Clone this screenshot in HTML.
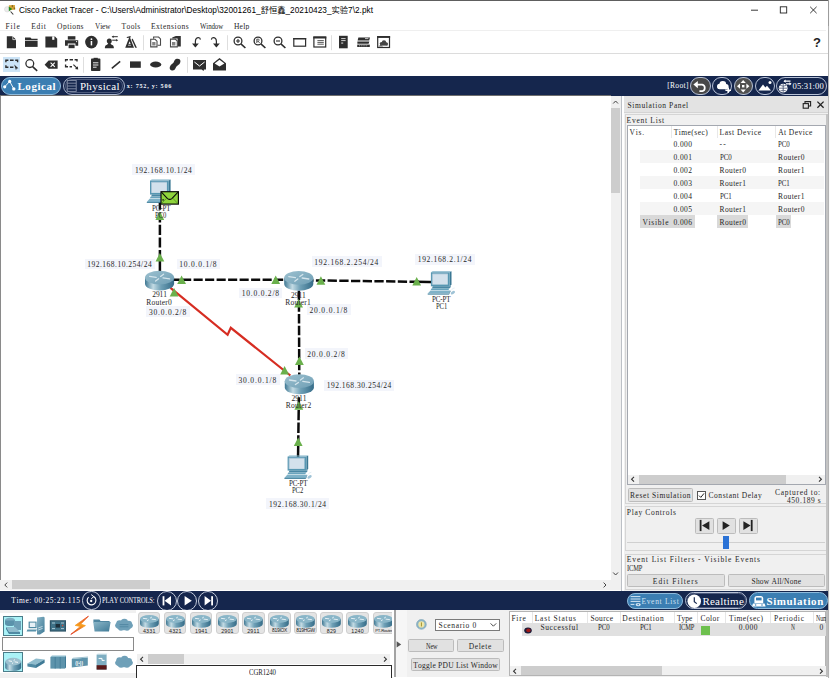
<!DOCTYPE html><html><head><meta charset="utf-8"><title>Cisco Packet Tracer</title><style>
html,body{margin:0;padding:0;background:#fff;}
#app{position:relative;width:830px;height:678px;overflow:hidden;background:#fff;font-family:"Liberation Serif",serif;font-size:7.5px;font-kerning:none;color:#262626;}
#app div,#app span,#app svg{position:absolute;box-sizing:border-box;}
.t{white-space:pre;line-height:10px;height:10px;}
.w{color:#fff;}
.btn{background:#e1e1e1;border:1px solid #bcbcbc;border-radius:1.5px;}
.lbl{background:#f3f5fb;}
.big{font-size:11px;line-height:14px;height:14px;color:#fff;font-weight:bold;}
.pill{border-radius:10px;border:1px solid #c9d3e6;}
</style></head><body><div id="app"><div class="" style="left:0px;top:0px;width:828.2px;height:1px;background:#5e5e5e"></div><svg style="left:3px;top:2px" width="14" height="14" viewBox="3 2 14 14"><circle cx="7.2" cy="9.3" r="2.7" fill="#ececec" stroke="#d0d0d0" stroke-width="0.5"/><path d="M8.8 5.2 L14.9 4.9 L15.2 9.6 L9.6 10.2Z" fill="#d8a83a"/><path d="M11.6 5.2 L13 5.1 L13.2 7 L11.8 7.2Z M13.6 7.6 L15 7.4 L15.1 9.2 L13.8 9.4Z" fill="#8a6a1e"/><path d="M8.7 6.4 L12.2 8.9 L8.9 11.2Z" fill="#1f8a22"/><path d="M10.6 11.5 L13.3 14.5" stroke="#3a3a3a" stroke-width="1.1"/></svg><span class="t" style="left:19px;top:5px;font-family:'Liberation Sans','Noto Sans CJK SC',sans-serif;font-size:8.29px;letter-spacing:0;line-height:11px;height:11px;color:#000" id="title">Cisco Packet Tracer - C:\Users\Administrator\Desktop\32001261_舒恒鑫_20210423_实验7\2.pkt</span><svg style="left:745px;top:3px" width="80" height="14" viewBox="0 0 80 14" fill="none" stroke="#222" stroke-width="0.9"><path d="M6 7.2 H13"/><rect x="35.3" y="3.8" width="6.4" height="6.2"/><path d="M65.2 3.8 L71.6 10.2 M71.6 3.8 L65.2 10.2"/></svg><span class="t " style="left:5.5px;top:21.7px;letter-spacing:0.91px;">File</span><span class="t " style="left:31.3px;top:21.7px;letter-spacing:0.71px;">Edit</span><span class="t " style="left:57.1px;top:21.7px;letter-spacing:0.44px;">Options</span><span class="t " style="left:94.7px;top:21.7px;letter-spacing:-0.12px;transform:scaleX(0.972);transform-origin:0 50%;">View</span><span class="t " style="left:121.5px;top:21.7px;letter-spacing:0.41px;">Tools</span><span class="t " style="left:150.9px;top:21.7px;letter-spacing:0.54px;">Extensions</span><span class="t " style="left:200.0px;top:21.7px;letter-spacing:-0.12px;transform:scaleX(0.915);transform-origin:0 50%;">Window</span><span class="t " style="left:234.0px;top:21.7px;letter-spacing:0.19px;">Help</span><div class="" style="left:0px;top:30px;width:826px;height:1px;background:#efefef"></div><div class="" style="left:0px;top:53px;width:830px;height:1px;background:#dcdcdc"></div><svg style="left:0;top:32px" width="830" height="21" viewBox="0 32 830 21" fill="#2e2e2e">
<!-- new file -->
<path d="M6.8 36.2 H12.6 L16 39.6 V48.2 H6.8Z"/><path d="M12.8 36 V39.6 H16.2" fill="none" stroke="#fff" stroke-width="0.7"/>
<!-- open folder -->
<path d="M25 37.4 H30.4 L31.6 38.8 H37.6 V40.2 H25Z"/><rect x="25" y="40.9" width="12.6" height="6" />
<!-- save -->
<path d="M45.4 36.6 H55 L57.2 38.8 V47.6 H45.4Z"/><rect x="52.2" y="36.4" width="2.2" height="3.4" fill="#fff"/>
<!-- print -->
<rect x="67.8" y="36.2" width="7.6" height="3.4"/><path d="M65 40.2 H78.2 V45.8 H75.4 V43.6 H67.8 V45.8 H65Z"/><rect x="68.6" y="44.6" width="6" height="3.6"/><circle cx="76.6" cy="41.6" r="0.6" fill="#fff"/>
<!-- info -->
<circle cx="91.4" cy="42.1" r="6.3"/><rect x="90.7" y="41" width="1.5" height="4.4" fill="#fff"/><circle cx="91.45" cy="39.2" r="0.9" fill="#fff"/>
<!-- user arrows -->
<circle cx="109.3" cy="41" r="2.5"/><path d="M104.9 48.3 V47 Q104.9 45.2 107.4 44.6 L108.3 43 H110.4 L111.2 44.6 Q113.8 45.2 113.8 47 V48.3Z"/><path d="M112.6 36.7 H117.8 M112.2 40.2 H117" stroke="#2e2e2e" stroke-width="1" fill="none"/><path d="M111.6 36.7 L113.6 35.4 V38Z M118.2 40.2 L116.2 38.9 V41.5Z"/>
<!-- wizard -->
<path d="M129.6 36.6 L134 47.7 H125.2Z"/><path d="M129.6 41.2 L131.2 45.6 H128Z" fill="#fff"/><path d="M128.2 44.4 H131" stroke="#2e2e2e" stroke-width="0.9"/><path d="M126.8 36.9 L130.6 35.9 V37.4 L126.8 37.9Z"/><path d="M132.6 38.4 L136.9 47.7 H135.3 L131.6 39.4Z"/>
<!-- sep -->
<rect x="143.2" y="35.2" width="0.7" height="15" fill="#d0d0d0"/>
<!-- copy -->
<g fill="none" stroke="#4a4a4a" stroke-width="1.1"><path d="M153.6 38.8 V37 H158.6 L160.5 38.9 V45.3 H157.6"/><path d="M150.7 39.3 H155.1 L157 41.2 V46.9 H150.7Z" fill="#fff"/></g><rect x="152.2" y="42" width="3.3" height="3.5" fill="#858585"/>
<!-- paste -->
<path d="M172.2 37.6 L175.8 35.9 H180.8 V46.6 H177.6 V38.6 H172.2Z" fill="#333"/><path d="M170.5 39.1 H175.3 L177.3 41 V46.9 H170.5Z" fill="#fff" stroke="#4a4a4a" stroke-width="1.1"/><rect x="172" y="42" width="3.4" height="3.5" fill="#858585"/>
<!-- undo -->
<g fill="none" stroke="#2e2e2e" stroke-width="1.2"><path d="M195.4 46.4 V41.6 Q195.4 37.6 198.6 37.6 Q200.2 37.6 200.4 39.6"/></g><path d="M192 43.6 H198.8 L195.4 47.4Z"/>
<!-- redo -->
<g fill="none" stroke="#2e2e2e" stroke-width="1.2"><path d="M216.4 46.4 V41.6 Q216.4 37.6 213.2 37.6 Q211.6 37.6 211.4 39.6"/></g><path d="M213 43.6 H219.8 L216.4 47.4Z"/>
<rect x="227" y="35.2" width="0.7" height="15" fill="#d0d0d0"/>
<!-- zoom in / reset / out -->
<g fill="none" stroke="#2e2e2e" stroke-width="1.3"><circle cx="238" cy="41" r="3.9"/><path d="M240.9 43.9 L245.4 48" stroke-width="1.6"/><path d="M236 41 H240 M238 39 V43" stroke-width="1.1"/>
<circle cx="258" cy="41" r="3.9"/><path d="M260.9 43.9 L265.4 48" stroke-width="1.6"/><path d="M256.8 43 V39.2 H258.4 Q259.4 39.4 259.2 40.4 Q259 41.2 257 41.2 M258.2 41.2 L259.6 43" stroke-width="0.8"/>
<circle cx="278" cy="41" r="3.9"/><path d="M280.9 43.9 L285.4 48" stroke-width="1.6"/><path d="M276 41 H280" stroke-width="1.1"/></g>
<!-- viewport -->
<rect x="293.8" y="38.6" width="11.8" height="7.6" fill="none" stroke="#2e2e2e" stroke-width="1.2"/><rect x="293.2" y="38" width="13" height="1.4"/>
<!-- list dialog -->
<rect x="313.9" y="37.1" width="11.8" height="9.9" fill="none" stroke="#2e2e2e" stroke-width="1.2"/><rect x="313.3" y="36.5" width="13" height="2"/><path d="M317.4 40.6 H323.8 M317.4 42.4 H323.8 M317.4 44.2 H323.8" stroke="#2e2e2e" stroke-width="0.8"/>
<rect x="331.2" y="35.2" width="0.7" height="15" fill="#d0d0d0"/>
<!-- server -->
<rect x="339" y="35.8" width="8.7" height="12.5"/><path d="M341.2 38.6 H345.6 M341.2 40.6 H345.6" stroke="#fff" stroke-width="0.8"/><rect x="341.2" y="42.6" width="2" height="0.9" fill="#fff"/>
<!-- stacked -->
<path d="M358.4 37.4 H370 L369.2 40.6 H357.6Z"/><path d="M357.4 41.4 H369.4 L368.6 43.8 H357.4Z"/><path d="M357.2 44.6 H369.8 V47 H357.2Z"/><path d="M359 45.8 H368" stroke="#fff" stroke-width="0.6" stroke-dasharray="1 0.8"/><path d="M365 38.6 H368.4" stroke="#fff" stroke-width="0.7"/>
<!-- image cloud -->
<rect x="377.7" y="36.7" width="11.8" height="10.8" fill="none" stroke="#2e2e2e" stroke-width="1.2"/><rect x="377.1" y="36.1" width="13" height="1.8"/><g fill="#444"><circle cx="381.4" cy="43.6" r="1.6"/><circle cx="384" cy="42.4" r="2.2"/><circle cx="386.4" cy="43.8" r="1.5"/><rect x="380" y="43.4" width="7.6" height="2.2"/></g><path d="M378.4 46.6 L381 44.2 L383 46.6" fill="#666"/>
</svg><span class="t" style="left:813px;top:34.6px;font-family:'Liberation Sans',sans-serif;font-weight:bold;font-size:13px;line-height:16px;height:16px;color:#222">?</span><div class="" style="left:3px;top:57px;width:17px;height:15.4px;background:#cce4f7"></div><svg style="left:0;top:55px" width="830" height="20" viewBox="0 55 830 20" fill="#2e2e2e">
<!-- select -->
<path d="M5.9 62.2 V60.3 H8.4 M10 60.3 H13.6 M15.2 60.3 H17.6 V62.2 M5.9 65.2 V67.2 H8.4 M10 67.2 H13.4" fill="none" stroke="#2e2e2e" stroke-width="1.4"/><path d="M14.2 64.6 L18.4 68.2 L16.6 68.4 L16 70.2 Z"/>
<!-- magnifier -->
<circle cx="29.8" cy="63.6" r="3.9" fill="none" stroke="#2e2e2e" stroke-width="1.3"/><path d="M32.6 66.6 L37.2 70.8" stroke="#2e2e2e" stroke-width="1.6"/>
<!-- delete -->
<path d="M44.6 64.7 L48.6 60.6 H57.6 V68.8 H48.6Z"/><path d="M50.6 62.6 L54.8 66.8 M54.8 62.6 L50.6 66.8" stroke="#fff" stroke-width="1.1"/>
<!-- resize -->
<path d="M65.6 61.6 V59.8 H68 M69.6 59.8 H73 M74.6 59.8 H77 V61.6 M65.6 64.6 V66.8 H68 M69.6 66.8 H72" fill="none" stroke="#2e2e2e" stroke-width="1.4"/><path d="M73.4 64.6 L77.2 68.4" stroke="#2e2e2e" stroke-width="1.2"/><path d="M78.2 69.4 L75 69 L77.8 66.2Z"/>
<rect x="83.2" y="57" width="0.7" height="15.8" fill="#d0d0d0"/>
<!-- note -->
<rect x="91" y="58.6" width="9.4" height="12.4" rx="0.8"/><rect x="93.6" y="57.8" width="4.2" height="1.8"/><path d="M93 62.8 H98.4 M93 65 H98.4 M93 67.2 H96.6" stroke="#fff" stroke-width="0.9"/>
<!-- line -->
<path d="M111.8 68.4 L120.2 61.4" stroke="#2e2e2e" stroke-width="1.6"/>
<!-- rect -->
<rect x="130" y="61.4" width="10.8" height="6.4"/>
<!-- ellipse -->
<ellipse cx="155.7" cy="64.5" rx="5.6" ry="3"/>
<!-- freeform -->
<path d="M176.6 58.8 Q180.8 58.4 180.4 62 Q180 64.4 177.6 65.6 Q176 66.6 175.4 68.6 Q174.6 70.8 171.8 70.4 Q169.2 69.8 169.8 67 Q170.4 64.8 172.6 63.6 Q173.8 62.8 174.2 61 Q174.8 59 176.6 58.8Z"/>
<rect x="187.2" y="57" width="0.7" height="15.8" fill="#d0d0d0"/>
<!-- envelope -->
<path d="M193 60 H206 V69.4 H204 L203.6 71 L201.6 69.4 H193Z"/><path d="M194.4 62 L199.5 66 L204.6 62" fill="none" stroke="#fff" stroke-width="1"/>
<!-- open envelope -->
<path d="M213 63.2 L219.5 58 L226 63.2 V70.6 H213Z"/><path d="M214.6 63.4 L219.5 59.8 L224.4 63.4 L219.5 66.6Z" fill="#fff"/>
</svg><div class="" style="left:0px;top:76px;width:830px;height:19.6px;background:#15264d"></div><div class="" style="left:0.8px;top:77.3px;width:60.6px;height:17.5px;background:#3b7eb2;border:1px solid #8fbbdc;border-radius:9px"></div><svg style="left:2px;top:78px" width="15" height="15" viewBox="0 0 15 15"><path d="M2.7 8.8 L7.7 3.4 L11.8 10.9" stroke="#fff" stroke-width="0.9" fill="none"/><circle cx="2.7" cy="8.8" r="1.6" fill="#fff"/><circle cx="7.7" cy="3.4" r="1.6" fill="#fff"/><circle cx="11.8" cy="10.9" r="1.7" fill="#fff"/></svg><span class="t big" style="left:17.5px;top:79.0px;font-size:11.0px;letter-spacing:0.52px;">Logical</span><div class="" style="left:63.4px;top:77.1px;width:61.4px;height:17.7px;background:#15264d;border:1px solid #aab6cd;border-radius:9px"></div><div class="" style="left:64.8px;top:78.5px;width:58.6px;height:14.9px;border:1px solid #4c5a7c;border-radius:8px"></div><svg style="left:66px;top:79px" width="12" height="14" viewBox="0 0 12 14" fill="none" stroke="#8993ab" stroke-width="0.9"><rect x="1.2" y="1.4" width="9" height="11"/><path d="M1.2 4.2 H10.2 M1.2 7 H10.2 M1.2 9.8 H10.2"/></svg><span class="t big" style="left:79.9px;top:79.0px;font-size:11.0px;letter-spacing:0.34px;font-weight:normal">Physical</span><span class="t w" style="left:126.8px;top:81.3px;font-size:6.2px;letter-spacing:0.73px;color:#f4f6fa;font-weight:bold">x: 752, y: 506</span><span class="t w" style="left:667.2px;top:80.5px;letter-spacing:0.34px;">[Root]</span><div class="" style="left:690.3px;top:77px;width:20.300000000000068px;height:17.6px;background:#484848;border:1px solid #b7c1d6;border-radius:9px"></div><div class="" style="left:712.3px;top:77px;width:19.700000000000045px;height:17.6px;background:#15264d;border:1px solid #b7c1d6;border-radius:9px"></div><div class="" style="left:733.8px;top:77px;width:19.40000000000009px;height:17.6px;background:#505050;border:1px solid #b7c1d6;border-radius:9px"></div><div class="" style="left:755.3px;top:77px;width:19.5px;height:17.6px;background:#15264d;border:1px solid #b7c1d6;border-radius:9px"></div><div class="" style="left:776.4px;top:77px;width:50.80000000000007px;height:17.6px;background:#15264d;border:1px solid #b7c1d6;border-radius:9px"></div><svg style="left:690.3px;top:77px" width="140" height="18" viewBox="0 0 140 18">
<g fill="none" stroke="#fff" stroke-width="1.7"><path d="M6 7.6 H12.2 A3.4 3.4 0 0 1 12.2 14.2 H9.4"/></g><path d="M3.4 7.6 L7.8 4 V11.2Z" fill="#fff"/>
<g fill="#fff"><circle cx="29.6" cy="9.4" r="2.6"/><circle cx="32.8" cy="7.4" r="3.4"/><circle cx="36" cy="9.6" r="2.6"/><rect x="28" y="9" width="9.6" height="3.2" rx="1.4"/><path d="M35.4 12.4 h2 v-1.8 h1.6 v1.8 h2 v1.6 h-2 v1.8 h-1.6 v-1.8 h-2z"/></g>
<g fill="#fff"><path d="M53.2 3 L55.8 6 H50.6Z"/><path d="M53.2 15.4 L55.8 12.4 H50.6Z"/><path d="M47 9.2 L50 6.6 V11.8Z"/><path d="M59.4 9.2 L56.4 6.6 V11.8Z"/><rect x="52" y="8" width="2.4" height="2.4"/></g>
<g fill="#fff"><path d="M68.4 13.6 L73 7.4 L75.4 10.4 L77 8.8 L81 13.6Z"/><circle cx="80" cy="5.6" r="1.5"/></g>
<g><circle cx="93.2" cy="11.2" r="4.4" fill="#fff"/><path d="M89 11.2 H97.4 M93.2 6.8 V15.6 M90.2 8.4 Q93.2 10 96.2 8.4 M90.2 14 Q93.2 12.4 96.2 14" stroke="#15264d" stroke-width="0.6" fill="none"/><path d="M94.5 4.2 H100.5 M96 6.8 H100.5" stroke="#fff" stroke-width="1.3"/><path d="M93.4 4.2 L95.6 2.6 V5.8Z M101.6 6.8 L99.4 5.2 V8.4Z" fill="#fff"/></g>
</svg><span class="t w" style="left:792.6px;top:81.1px;font-size:8.6px;letter-spacing:0.08px;">05:31:00</span><div style="left:0;top:95.6px;width:610.8px;height:484.4px;background:#fff;overflow:hidden"></div><div class="" style="left:0px;top:95.3px;width:610.7px;height:0.8px;background:#6e6e6e"></div><div class="" style="left:0px;top:95.6px;width:0.9px;height:494.3px;background:#8a8a8a"></div><div class="lbl" style="left:132.3px;top:164.1px;height:10.8px;width:62.7px"></div><span class="t" style="left:134.9px;top:165.6px;letter-spacing:0.57px;">192.168.10.1/24</span><div class="lbl" style="left:84.6px;top:258.6px;height:10.8px;width:70.2px"></div><span class="t" style="left:87.2px;top:260.1px;letter-spacing:0.50px;">192.168.10.254/24</span><div class="lbl" style="left:176.6px;top:258.6px;height:10.8px;width:43.4px"></div><span class="t" style="left:179.2px;top:260.1px;letter-spacing:0.80px;">10.0.0.1/8</span><div class="lbl" style="left:239.1px;top:287.7px;height:10.8px;width:43.3px"></div><span class="t" style="left:241.7px;top:289.2px;letter-spacing:0.79px;">10.0.0.2/8</span><div class="lbl" style="left:146.4px;top:306.3px;height:10.8px;width:43.2px"></div><span class="t" style="left:149.0px;top:307.8px;letter-spacing:0.78px;">30.0.0.2/8</span><div class="lbl" style="left:311.7px;top:256.2px;height:10.8px;width:69.9px"></div><span class="t" style="left:314.3px;top:257.7px;letter-spacing:0.75px;">192.168.2.254/24</span><div class="lbl" style="left:415.2px;top:253.9px;height:10.8px;width:59.5px"></div><span class="t" style="left:417.8px;top:255.4px;letter-spacing:0.65px;">192.168.2.1/24</span><div class="lbl" style="left:306.9px;top:304.3px;height:10.8px;width:43.7px"></div><span class="t" style="left:309.5px;top:305.8px;letter-spacing:0.83px;">20.0.0.1/8</span><div class="lbl" style="left:304.6px;top:348.2px;height:10.8px;width:43.7px"></div><span class="t" style="left:307.2px;top:349.7px;letter-spacing:0.83px;">20.0.0.2/8</span><div class="lbl" style="left:235.9px;top:374.2px;height:10.8px;width:43.7px"></div><span class="t" style="left:238.5px;top:375.7px;letter-spacing:0.83px;">30.0.0.1/8</span><div class="lbl" style="left:324.1px;top:379.8px;height:10.8px;width:70.3px"></div><span class="t" style="left:326.7px;top:381.3px;letter-spacing:0.51px;">192.168.30.254/24</span><div class="lbl" style="left:266.3px;top:498.3px;height:10.8px;width:62.9px"></div><span class="t" style="left:268.9px;top:499.8px;letter-spacing:0.58px;">192.168.30.1/24</span><svg style="left:0;top:0" width="620" height="590" viewBox="0 0 620 590"><defs>
<linearGradient id="rb" x1="0" x2="1" y1="0" y2="0"><stop offset="0" stop-color="#3f7893"/><stop offset="0.28" stop-color="#c3dbe4"/><stop offset="0.55" stop-color="#6fa0b6"/><stop offset="1" stop-color="#356c88"/></linearGradient>
<linearGradient id="rt" x1="0" x2="1" y1="0" y2="1"><stop offset="0" stop-color="#9cc0cf"/><stop offset="1" stop-color="#6f9fb5"/></linearGradient>
<g id="router"><path d="M0 7 V13.2 A14.55 6.8 0 0 0 29.1 13.2 V7 Z" fill="url(#rb)"/><ellipse cx="14.55" cy="7" rx="14.55" ry="6.9" fill="url(#rt)"/><g stroke="#d9e8ef" stroke-width="1.3" fill="none" stroke-linecap="round" opacity="0.95"><path d="M4.6 5.8 L11.2 6.8"/><path d="M18 7.2 L24.6 8.2"/><path d="M10.6 10.4 L13.6 8.2"/><path d="M15.6 5.8 L18.6 3.6"/></g></g>
<linearGradient id="pcg" x1="0" x2="1" y1="0" y2="1"><stop offset="0" stop-color="#6aa6bf"/><stop offset="1" stop-color="#3e7f9c"/></linearGradient>
<g id="pc"><path d="M3.4 1.1 L5.2 0 H24 L22.2 1.1Z" fill="#7fb2c8"/><path d="M22.2 1.1 L24 0 V13.6 L22.2 15.1Z" fill="#3a7793"/><rect x="3.4" y="1.1" width="18.8" height="14" fill="#5797b2"/><rect x="4.9" y="2.7" width="15.4" height="10.7" fill="#d3e1ec"/><path d="M4.9 13.4 V2.7 H20.3" fill="none" stroke="#aac4d6" stroke-width="0.8"/><path d="M5.2 15.1 H22.2 L23.2 14.4 V16 L22 17 H4.6Z" fill="#4a88a4"/><path d="M4.2 17 H22 L21 18.8 H3.2Z" fill="#6aa4bd"/><path d="M3 19.2 H23 L21.6 22.4 H0.2Z" fill="#7fb2c8"/><path d="M0.2 22.4 H21.6 V23.4 H0.2Z" fill="#3f7f9b"/><path d="M21.6 22.4 L23 19.2 V20.2 L21.6 23.4Z" fill="#356e88"/><ellipse cx="25.4" cy="21.4" rx="2.4" ry="1.4" transform="rotate(-35 25.4 21.4)" fill="#9fc3d6"/><path d="M24 19 Q25 16.6 27.2 16.8" fill="none" stroke="#dbe8f0" stroke-width="0.7"/></g>
<path id="tri" d="M0 -4.3 L4.4 4.2 L-4.4 4.2 Z" fill="#6ab04c"/>
</defs><path d="M159.9 199.6 V262" stroke="#0a0a0a" stroke-width="2.5" stroke-dasharray="10.2 2.4" fill="none"/><path d="M159.9 259 V280" stroke="#0a0a0a" stroke-width="2.5" fill="none"/><path d="M159.1 279.8 H299" stroke="#0a0a0a" stroke-width="2.5" stroke-dasharray="9.1 2.4" fill="none"/><path d="M292.5 280.1 L419 281.8" stroke="#0a0a0a" stroke-width="2.5" stroke-dasharray="9.3 2.4" fill="none"/><path d="M416 281.8 L441.5 282.2" stroke="#0a0a0a" stroke-width="2.5" fill="none"/><path d="M298.9 290.6 L299.3 384" stroke="#0a0a0a" stroke-width="2.5" stroke-dasharray="9.5 2.2" fill="none"/><path d="M298.9 397.2 L298.2 445" stroke="#0a0a0a" stroke-width="2.5" stroke-dasharray="10.3 2.4" fill="none"/><path d="M298.25 443 L298 459" stroke="#0a0a0a" stroke-width="2.5" fill="none"/><path d="M170.5 287.8 L227.6 334.8 L230.8 327.8 L290.4 375.5" stroke="#d62d22" stroke-width="2.2" fill="none" stroke-linejoin="miter"/><use href="#pc" x="146.6" y="179.5"/><use href="#router" x="145" y="270.6"/><use href="#router" x="284.2" y="270.8"/><use href="#router" x="284.8" y="374.2"/><use href="#pc" x="427.5" y="271.2"/><use href="#pc" x="284.2" y="455.5"/><g><rect x="161" y="191.7" width="17.4" height="12.4" fill="#8fd43c" stroke="#0a0a0a" stroke-width="1.2"/><path d="M161.4 192.2 L167.5 198.6 Q169.7 200.2 171.9 198.6 L178 192.2" fill="none" stroke="#0a0a0a" stroke-width="1.1"/><path d="M161.5 203.6 L166.6 198.2 M177.9 203.6 L172.8 198.2" stroke="#3d7a1a" stroke-width="0.6"/><rect x="162.4" y="199.2" width="1.4" height="1.4" fill="#111"/></g><use href="#tri" x="159.8" y="215.8"/><use href="#tri" x="159.9" y="257.4"/><use href="#tri" x="181.6" y="279.9"/><use href="#tri" x="275.7" y="279.9"/><use href="#tri" x="174.1" y="292.2"/><use href="#tri" x="320.9" y="280.5"/><use href="#tri" x="416.7" y="281.4"/><use href="#tri" x="298.6" y="303.2"/><use href="#tri" x="299.4" y="360.7"/><use href="#tri" x="284.6" y="370.4"/><use href="#tri" x="298.8" y="405.5"/><use href="#tri" x="298.2" y="441.8"/></svg><span class="t" style="left:151.8px;top:203.7px;letter-spacing:-0.12px;transform:scaleX(0.933);transform-origin:0 50%;">PC-PT</span><span class="t" style="left:155.4px;top:210.5px;letter-spacing:-0.12px;transform:scaleX(0.883);transform-origin:0 50%;">PC0</span><span class="t" style="left:152.2px;top:290.1px;letter-spacing:-0.05px;">2911</span><span class="t" style="left:146.2px;top:297.7px;letter-spacing:0.25px;">Router0</span><span class="t" style="left:291.0px;top:291.1px;letter-spacing:-0.05px;">2911</span><span class="t" style="left:285.2px;top:298.3px;letter-spacing:0.25px;">Router1</span><span class="t" style="left:291.6px;top:393.7px;letter-spacing:-0.05px;">2911</span><span class="t" style="left:285.7px;top:400.9px;letter-spacing:0.25px;">Router2</span><span class="t" style="left:432.1px;top:295.1px;letter-spacing:-0.12px;transform:scaleX(0.933);transform-origin:0 50%;">PC-PT</span><span class="t" style="left:435.8px;top:301.7px;letter-spacing:-0.12px;transform:scaleX(0.883);transform-origin:0 50%;">PC1</span><span class="t" style="left:288.6px;top:478.9px;letter-spacing:-0.12px;transform:scaleX(0.933);transform-origin:0 50%;">PC-PT</span><span class="t" style="left:292.2px;top:485.7px;letter-spacing:-0.12px;transform:scaleX(0.883);transform-origin:0 50%;">PC2</span><div class="" style="left:610.7px;top:95.6px;width:10.1px;height:484.4px;background:#f0f0f0"></div><div class="" style="left:611.3px;top:107.5px;width:8.9px;height:85.2px;background:#cdcdcd"></div><div class="" style="left:0px;top:580px;width:620.8px;height:9.7px;background:#f0f0f0"></div><div class="" style="left:12px;top:580.3px;width:138px;height:8.7px;background:#cdcdcd"></div><svg style="left:611px;top:97px" width="10" height="10" viewBox="0 0 10 10" fill="none" stroke="#444" stroke-width="1"><path d="M2.2 6.5 L4.6 4 L7 6.5"/></svg><svg style="left:611px;top:569px" width="10" height="10" viewBox="0 0 10 10" fill="none" stroke="#444" stroke-width="1"><path d="M2.2 3.5 L4.6 6 L7 3.5"/></svg><svg style="left:1.2px;top:579.8px" width="10" height="10" viewBox="0 0 10 10" fill="none" stroke="#444" stroke-width="1"><path d="M6.2 2.6 L3.8 5 L6.2 7.4"/></svg><svg style="left:600px;top:580px" width="10" height="10" viewBox="0 0 10 10" fill="none" stroke="#444" stroke-width="1"><path d="M3.6 2.6 L6 5 L3.6 7.4"/></svg><div class="" style="left:620.8px;top:95.6px;width:209.2px;height:495px;background:#f0f0f0"></div><div class="" style="left:620.8px;top:95.6px;width:1.2px;height:495px;background:#bcc0c6"></div><div class="" style="left:622px;top:95.6px;width:2px;height:495px;background:#fff"></div><div class="" style="left:624px;top:95.8px;width:203.5px;height:17.2px;background:#e3e3e3;border-bottom:1px solid #d4d4d4"></div><span class="t " style="left:627.6px;top:101.1px;letter-spacing:0.61px;">Simulation Panel</span><svg style="left:801px;top:99px" width="26" height="12" viewBox="0 0 26 12" fill="none" stroke="#222" stroke-width="1.1"><rect x="2.2" y="4.6" width="5.2" height="4.6"/><path d="M4 4.6 V2.6 H9.6 V7 H7.4"/><path d="M16.4 2.6 L22.6 8.8 M22.6 2.6 L16.4 8.8" stroke-width="1.3"/></svg><div class="" style="left:624.6px;top:114.4px;width:204px;height:390px;border:1px solid #d5d5d5;background:#f0f0f0"></div><span class="t " style="left:626.6px;top:116.1px;letter-spacing:0.73px;">Event List</span><div class="" style="left:626.6px;top:124.8px;width:199.4px;height:360.4px;background:#fff;border:1px solid #a4a8b0"></div><span class="t " style="left:629.6px;top:127.9px;letter-spacing:0.76px;">Vis.</span><span class="t " style="left:673.7px;top:127.9px;letter-spacing:0.45px;">Time(sec)</span><span class="t " style="left:719.5px;top:127.9px;letter-spacing:0.56px;">Last Device</span><span class="t " style="left:778.2px;top:127.9px;letter-spacing:0.43px;">At Device</span><div class="" style="left:670.6px;top:126.4px;width:1px;height:11.6px;background:#e8e8e8"></div><div class="" style="left:716.6px;top:126.4px;width:1px;height:11.6px;background:#e8e8e8"></div><div class="" style="left:775px;top:126.4px;width:1px;height:11.6px;background:#e8e8e8"></div><span class="t " style="left:673.4px;top:140.0px;letter-spacing:0.45px;">0.000</span><span class="t " style="left:719.5px;top:140.0px;letter-spacing:1.33px;">--</span><span class="t " style="left:778.0px;top:140.0px;letter-spacing:-0.12px;transform:scaleX(0.915);transform-origin:0 50%;">PC0</span><div class="" style="left:640.2px;top:150.42px;width:184px;height:12.8px;background:#f5f5f5"></div><span class="t " style="left:673.4px;top:152.9px;letter-spacing:0.45px;">0.001</span><span class="t " style="left:719.5px;top:152.9px;letter-spacing:-0.12px;transform:scaleX(0.915);transform-origin:0 50%;">PC0</span><span class="t " style="left:778.0px;top:152.9px;letter-spacing:0.38px;">Router0</span><span class="t " style="left:673.4px;top:165.8px;letter-spacing:0.45px;">0.002</span><span class="t " style="left:719.5px;top:165.8px;letter-spacing:0.38px;">Router0</span><span class="t " style="left:778.0px;top:165.8px;letter-spacing:0.38px;">Router1</span><div class="" style="left:640.2px;top:176.26px;width:184px;height:12.8px;background:#f5f5f5"></div><span class="t " style="left:673.4px;top:178.8px;letter-spacing:0.45px;">0.003</span><span class="t " style="left:719.5px;top:178.8px;letter-spacing:0.38px;">Router1</span><span class="t " style="left:778.0px;top:178.8px;letter-spacing:-0.12px;transform:scaleX(0.915);transform-origin:0 50%;">PC1</span><span class="t " style="left:673.4px;top:191.7px;letter-spacing:0.45px;">0.004</span><span class="t " style="left:719.5px;top:191.7px;letter-spacing:-0.12px;transform:scaleX(0.915);transform-origin:0 50%;">PC1</span><span class="t " style="left:778.0px;top:191.7px;letter-spacing:0.38px;">Router1</span><div class="" style="left:640.2px;top:202.1px;width:184px;height:12.8px;background:#f5f5f5"></div><span class="t " style="left:673.4px;top:204.6px;letter-spacing:0.45px;">0.005</span><span class="t " style="left:719.5px;top:204.6px;letter-spacing:0.38px;">Router1</span><span class="t " style="left:778.0px;top:204.6px;letter-spacing:0.38px;">Router0</span><div class="" style="left:640.2px;top:215.22000000000003px;width:54.4px;height:12.4px;background:#d9d9d9"></div><div class="" style="left:717.4px;top:215.22000000000003px;width:31px;height:12.4px;background:#d9d9d9"></div><div class="" style="left:775.6px;top:215.22000000000003px;width:15.6px;height:12.4px;background:#d9d9d9"></div><span class="t " style="left:642.4px;top:217.5px;letter-spacing:0.74px;">Visible</span><span class="t " style="left:673.4px;top:217.5px;letter-spacing:0.45px;">0.006</span><span class="t " style="left:719.5px;top:217.5px;letter-spacing:0.38px;">Router0</span><span class="t " style="left:778.0px;top:217.5px;letter-spacing:-0.12px;transform:scaleX(0.915);transform-origin:0 50%;">PC0</span><div class="" style="left:627.6px;top:474.8px;width:197.4px;height:9px;background:#f0f0f0"></div><div class="" style="left:639px;top:474.8px;width:146.8px;height:9px;background:#cdcdcd"></div><svg style="left:628px;top:474px" width="10" height="10" viewBox="0 0 10 10" fill="none" stroke="#333" stroke-width="1.1"><path d="M6 2.8 L3.6 5.2 L6 7.6"/></svg><svg style="left:815px;top:474px" width="10" height="10" viewBox="0 0 10 10" fill="none" stroke="#333" stroke-width="1.1"><path d="M4 2.8 L6.4 5.2 L4 7.6"/></svg><div class="btn" style="left:627.5px;top:487.7px;width:65.8px;height:14.5px;"></div><span class="t " style="left:629.9px;top:491.3px;letter-spacing:0.61px;">Reset Simulation</span><div class="" style="left:697.2px;top:490.8px;width:8.8px;height:8.8px;background:#fff;border:1px solid #555"></div><svg style="left:697.2px;top:490.8px" width="9" height="9" viewBox="0 0 9 9" fill="none" stroke="#222" stroke-width="1"><path d="M2 4.6 L3.8 6.4 L7 2.4"/></svg><span class="t " style="left:708.6px;top:491.3px;letter-spacing:0.51px;">Constant Delay</span><span class="t " style="left:775.0px;top:487.7px;letter-spacing:0.72px;">Captured to:</span><span class="t " style="left:786.9px;top:495.9px;letter-spacing:0.59px;">450.189 s</span><div class="" style="left:624.6px;top:506.3px;width:204px;height:45px;border:1px solid #d5d5d5;background:#f0f0f0"></div><span class="t " style="left:626.8px;top:508.0px;letter-spacing:0.67px;">Play Controls</span><div class="btn" style="left:694.7px;top:517.5px;width:19.4px;height:16.4px;"></div><div class="btn" style="left:716.7px;top:517.5px;width:19.4px;height:16.4px;"></div><div class="btn" style="left:738.6px;top:517.5px;width:19.4px;height:16.4px;"></div><svg style="left:690px;top:515px" width="70" height="22" viewBox="690 515 70 22" fill="#222"><rect x="699.7" y="519.9" width="1.8" height="11.2"/><path d="M709.4 521.3 V529.9 L702 525.6Z"/><path d="M722.6 521.3 V529.9 L729.8 525.6Z"/><path d="M743.4 521.3 V529.9 L750.6 525.6Z"/><rect x="750.8" y="519.9" width="1.8" height="11.2"/></svg><div class="" style="left:627px;top:541.8px;width:198px;height:1.2px;background:#e0e0e0;border-top:0.6px solid #d0d0d0"></div><div class="" style="left:722.6px;top:536px;width:6.8px;height:13.4px;background:#2b72d6"></div><div class="" style="left:624.6px;top:553.7px;width:204px;height:36px;border:1px solid #d5d5d5;background:#f0f0f0"></div><span class="t " style="left:626.8px;top:555.3px;letter-spacing:0.91px;">Event List Filters - Visible Events</span><span class="t " style="left:626.8px;top:563.7px;letter-spacing:-0.12px;transform:scaleX(0.858);transform-origin:0 50%;">ICMP</span><div class="btn" style="left:627px;top:574.4px;width:97.6px;height:13px;"></div><span class="t " style="left:652.8px;top:577.1px;letter-spacing:1.03px;">Edit Filters</span><div class="btn" style="left:728px;top:574.4px;width:96.8px;height:13px;"></div><span class="t " style="left:751.5px;top:577.1px;letter-spacing:0.22px;">Show All/None</span><div class="" style="left:826px;top:114px;width:2.3px;height:476.6px;background:#c4c4c4"></div><div class="" style="left:0px;top:590.9px;width:830px;height:19px;background:#15264d"></div><span class="t w" style="left:11.3px;top:596.4px;letter-spacing:0.54px;">Time: 00:25:22.115</span><div class="" style="left:82.2px;top:591.4px;width:18.4px;height:18.4px;background:#15264d;border:1px solid #c3cbdb;border-radius:50%"></div><svg style="left:82.2px;top:591.4px" width="19" height="19" viewBox="0 0 19 19" fill="none" stroke="#fff" stroke-width="1.1"><path d="M11.6 5.6 A4.4 4.4 0 1 1 6.6 6.2"/><path d="M9.2 3.6 L11.8 5.6 L9.2 7.8" stroke-width="1"/><circle cx="9.2" cy="10" r="0.6" fill="#fff"/></svg><span class="t w" style="left:101.6px;top:596.4px;letter-spacing:-0.12px;transform:scaleX(0.854);transform-origin:0 50%;">PLAY CONTROLS:</span><div class="" style="left:156.9px;top:590.8px;width:20px;height:20px;background:#15264d;border:1px solid #c3cbdb;border-radius:50%"></div><div class="" style="left:177.4px;top:590.8px;width:20px;height:20px;background:#15264d;border:1px solid #c3cbdb;border-radius:50%"></div><div class="" style="left:198.2px;top:590.8px;width:20px;height:20px;background:#15264d;border:1px solid #c3cbdb;border-radius:50%"></div><svg style="left:156.8px;top:591px" width="62" height="20" viewBox="0 0 62 20" fill="#fff"><rect x="5.6" y="5.2" width="1.8" height="9.2"/><path d="M14 5 V14.6 L7.6 9.8Z"/><path d="M27.6 5 V14.6 L34.8 9.8Z"/><path d="M47.6 5 V14.6 L54 9.8Z"/><rect x="54.2" y="5.2" width="1.8" height="9.2"/></svg><div class="" style="left:627px;top:593px;width:56.4px;height:16px;background:#3b7eb2;border:1px solid #8fbbdc;border-radius:8px"></div><svg style="left:629px;top:594px" width="14" height="14" viewBox="0 0 14 14" fill="none" stroke="#d6e6f3" stroke-width="1"><path d="M1.6 2.6 H11.4 M1.6 5 H11.4 M1.6 7.4 H11.4"/><path d="M1.6 10.4 H5.4" /><ellipse cx="9.2" cy="10.6" rx="2.6" ry="1.7" fill="#d6e6f3" stroke="none"/><circle cx="9.2" cy="10.6" r="0.8" fill="#3b7eb2" stroke="none"/></svg><span class="t " style="left:641.4px;top:596.7px;letter-spacing:0.70px;color:#cfe2f2">Event List</span><div class="" style="left:685.3px;top:592px;width:62px;height:17px;background:#15264d;border:1px solid #b7c1d6;border-radius:9px"></div><div class="" style="left:686.7px;top:593.4px;width:59.2px;height:14.2px;border:1px solid #4c5a7c;border-radius:8px"></div><svg style="left:687px;top:593.6px" width="15" height="15" viewBox="0 0 15 15"><circle cx="7.3" cy="7.2" r="6.7" fill="#fff"/><path d="M7.3 3.2 V7.6 L9.8 9.6" stroke="#15264d" stroke-width="1.2" fill="none"/></svg><span class="t big" style="left:702.4px;top:594.0px;font-size:11.0px;letter-spacing:0.24px;font-weight:normal">Realtime</span><div class="" style="left:749.4px;top:591.9px;width:78.2px;height:17.2px;background:#3b7eb2;border:1px solid #8fbbdc;border-radius:9px"></div><svg style="left:751px;top:594px" width="16" height="15" viewBox="0 0 16 15" fill="#fff"><path d="M3.4 9 V4.6 Q3.4 2 6 2 H9.6 Q12.2 2 12.2 4.6 V9 Z"/><rect x="5" y="3.6" width="5.6" height="2.8" fill="#3b7eb2"/><path d="M2 9.4 H13.6 L14.6 12.6 H1 Z"/><circle cx="4.6" cy="11" r="0.8" fill="#3b7eb2"/><circle cx="11" cy="11" r="0.8" fill="#3b7eb2"/></svg><span class="t big" style="left:766.4px;top:594.0px;font-size:11.0px;letter-spacing:0.62px;">Simulation</span><div class="" style="left:0px;top:609.8px;width:830px;height:68.2px;background:#f0f0f0"></div><div class="" style="left:0px;top:613px;width:135.6px;height:59.6px;background:#fff"></div><div class="" style="left:3.2px;top:616.1px;width:19.6px;height:19.5px;background:#aaf2f7;border:1px solid #4a7d8a"></div><div class="" style="left:3.2px;top:652.2px;width:19.6px;height:19.5px;background:#aaf2f7;border:1px solid #4a7d8a"></div><div class="" style="left:2px;top:637.2px;width:132px;height:13.4px;background:#fff;border:1px solid #8a8a8a"></div><svg style="left:0;top:610px" width="137" height="68" viewBox="0 0 137 68">
<defs><linearGradient id="bg1" x1="0" x2="1" y1="0" y2="1"><stop offset="0" stop-color="#8ab6c8"/><stop offset="1" stop-color="#3f7a96"/></linearGradient>
<linearGradient id="lt" x1="0" x2="0" y1="0" y2="1"><stop offset="0" stop-color="#e03a1e"/><stop offset="0.5" stop-color="#f7a01c"/><stop offset="1" stop-color="#dc2f1c"/></linearGradient></defs>
<!-- row1 #1 network devices -->
<g><ellipse cx="10" cy="10.4" rx="5" ry="2.6" fill="#7eaec2"/><path d="M5 10.4 V13.4 A5 2.6 0 0 0 15 13.4 V10.4Z" fill="#5a93ab"/><path d="M14 11 H21 V20 H14Z" fill="#6c9fb6"/><path d="M6 17 L15 17 L20 22 L9 22Z" fill="#8fbccd"/><path d="M9 22 H20 V24 H9Z" fill="#4f8aa3"/><path d="M6 17 L9 22 V24 L6 19Z" fill="#3f7a96"/></g>
<!-- #2 end devices -->
<g><path d="M37 7.6 L43.6 6.8 L44.6 7.6 V21.6 L40 24.4 H37Z" fill="url(#bg1)"/><path d="M38.2 18 L42.6 16.4 M38.2 20 L42.6 18.4" stroke="#d9e8ef" stroke-width="0.8"/><rect x="28.6" y="11.6" width="8" height="6.6" fill="#4f8aa3"/><rect x="29.8" y="12.6" width="5.6" height="4.4" fill="#e6f0f6"/><path d="M27.4 19.6 H37 L35.8 21.6 H26.6Z" fill="#5a93ab"/></g>
<!-- #3 components -->
<g><rect x="49.8" y="10.2" width="16.2" height="11.4" fill="#2f5568"/><rect x="51" y="11.4" width="13.8" height="9" fill="#3f7288"/><rect x="55.6" y="14" width="4.4" height="3.6" fill="#1d2f3a"/><path d="M52 13 H55 M61 13 H64 M52 18.6 H55 M61 18.6 H64" stroke="#b9d3de" stroke-width="0.9"/><circle cx="62.6" cy="15.6" r="0.8" fill="#d0503a"/></g>
<!-- #4 connections -->
<path d="M88.4 6.2 L75.2 15.4 L80.4 16.4 L70.8 24.4 L85.4 15.6 L80.6 14.2 Z" fill="url(#lt)" stroke="url(#lt)" stroke-width="0.8" stroke-linejoin="round"/>
<!-- #5 misc folder -->
<g><path d="M93.4 9.6 H99.4 L100.6 11 H109.6 V12.4 H93.4Z" fill="#4f86a0"/><path d="M93.2 12 H110.6 L109 21.4 H94.6Z" fill="url(#bg1)"/></g>
<!-- #6 multiuser cloud -->
<g fill="#6fa0b8"><ellipse cx="124" cy="15.6" rx="9" ry="4.6"/><circle cx="119.6" cy="13.6" r="3.4"/><circle cx="124.4" cy="12.6" r="3.8"/><circle cx="128.8" cy="14" r="3.2"/><circle cx="121" cy="17.8" r="3"/><circle cx="127" cy="17.8" r="3"/></g><path d="M119.6 14.6 H128.4 M119.6 16.8 H128.4" stroke="#4f86a0" stroke-width="0.9"/>
<!-- row2 #1 router -->
<g><path d="M5.2 51.6 V57.4 A8 3.6 0 0 0 21.2 57.4 V51.6Z" fill="url(#rb)"/><ellipse cx="13.2" cy="51.6" rx="8" ry="3.8" fill="#9cc0cf"/><path d="M8.6 50.8 L12 51.4 M14.6 51.8 L18 52.4 M12 53.6 L13.2 52.6 M13.6 50.6 L15 49.6" stroke="#fff" stroke-width="0.9"/></g>
<!-- #2 switch -->
<g><path d="M27.4 53.4 L36 48.6 L44.6 49.6 L36 54.6Z" fill="#8fbccd"/><path d="M27.4 53.4 L36 54.6 V58 L27.4 56.6Z" fill="#4f8aa3"/><path d="M36 54.6 L44.6 49.6 V52.8 L36 58Z" fill="#3f7a96"/></g>
<!-- #3 hub rack -->
<g><rect x="50.4" y="47" width="14.6" height="11.6" fill="#5d93ab"/><path d="M50.4 47 L52 45.6 H66 L65 47Z" fill="#8fbccd"/><path d="M65 47 L66 45.6 V57.4 L65 58.6Z" fill="#3f7a96"/><path d="M55.2 47 V58.6 M60.2 47 V58.6" stroke="#3f7a96" stroke-width="0.8"/></g>
<!-- #4 wireless -->
<g><path d="M71.8 49 L87.8 47.4 V55.6 L71.8 57.4Z" fill="#5d93ab"/><path d="M71.8 49 L73 47.8 L88 46.6 L87.8 47.4Z" fill="#9cc0cf"/><text x="75.2" y="55" font-family="Liberation Sans,sans-serif" font-size="4.6" fill="#fff" font-weight="bold">((•))</text></g>
<!-- #5 security -->
<g><rect x="96.6" y="44.6" width="10" height="15" fill="#7eaec2"/><rect x="96.6" y="55.2" width="10" height="4.4" fill="#5a1a1a"/><path d="M98.6 48.4 H102 V50.4 H104.6" stroke="#fff" stroke-width="1" fill="none"/><path d="M96.6 44.6 L97.6 43.8 H107.4 L106.6 44.6Z" fill="#a9cbd8"/></g>
<!-- #6 wan cloud -->
<g fill="#6fa0b8"><ellipse cx="124" cy="52.8" rx="9" ry="4.4"/><circle cx="119.6" cy="50.6" r="3.4"/><circle cx="124.6" cy="49.6" r="3.8"/><circle cx="128.8" cy="51.2" r="3.2"/><circle cx="121" cy="54.8" r="3"/><circle cx="127" cy="54.8" r="3"/></g>
</svg><div class="" style="left:135.6px;top:610px;width:1px;height:68px;background:#fff"></div><div class="" style="left:136.6px;top:610px;width:257.6px;height:66.7px;background:#fff"></div><div style="left:136.6px;top:610px;width:255px;height:45px;overflow:hidden"><div style="left:1.5px;top:2.2px;width:22.3px;height:21.9px;background:#e4e4e4;border:1px solid #cfcfcf;border-radius:3px"></div><svg style="left:3.4px;top:4.5px" width="18.8" height="13" viewBox="0 0 28.4 19.6"><path d="M0 6 V13.4 A14.2 6 0 0 0 28.4 13.4 V6 Z" fill="url(#rb)"/><ellipse cx="14.2" cy="6" rx="14.2" ry="5.9" fill="#8ab6c8"/><g stroke="#e3eff4" stroke-width="1.5" fill="none"><path d="M4.5 5 L11 5.8"/><path d="M17.5 6.2 L24 7"/><path d="M10.5 9 L13.2 7.2"/><path d="M15.2 4.8 L18 3"/></g></svg><span class="t" style="left:-1.5px;width:28.3px;text-align:center;top:16.1px;font-family:'Liberation Sans',sans-serif;font-size:5.3px;letter-spacing:0.2px;color:#1a1a1a">4331</span><div style="left:27.6px;top:2.2px;width:22.3px;height:21.9px;background:#e4e4e4;border:1px solid #cfcfcf;border-radius:3px"></div><svg style="left:29.5px;top:4.5px" width="18.8" height="13" viewBox="0 0 28.4 19.6"><path d="M0 6 V13.4 A14.2 6 0 0 0 28.4 13.4 V6 Z" fill="url(#rb)"/><ellipse cx="14.2" cy="6" rx="14.2" ry="5.9" fill="#8ab6c8"/><g stroke="#e3eff4" stroke-width="1.5" fill="none"><path d="M4.5 5 L11 5.8"/><path d="M17.5 6.2 L24 7"/><path d="M10.5 9 L13.2 7.2"/><path d="M15.2 4.8 L18 3"/></g></svg><span class="t" style="left:24.6px;width:28.3px;text-align:center;top:16.1px;font-family:'Liberation Sans',sans-serif;font-size:5.3px;letter-spacing:0.2px;color:#1a1a1a">4321</span><div style="left:53.6px;top:2.2px;width:22.3px;height:21.9px;background:#e4e4e4;border:1px solid #cfcfcf;border-radius:3px"></div><svg style="left:55.5px;top:4.5px" width="18.8" height="13" viewBox="0 0 28.4 19.6"><path d="M0 6 V13.4 A14.2 6 0 0 0 28.4 13.4 V6 Z" fill="url(#rb)"/><ellipse cx="14.2" cy="6" rx="14.2" ry="5.9" fill="#8ab6c8"/><g stroke="#e3eff4" stroke-width="1.5" fill="none"><path d="M4.5 5 L11 5.8"/><path d="M17.5 6.2 L24 7"/><path d="M10.5 9 L13.2 7.2"/><path d="M15.2 4.8 L18 3"/></g></svg><span class="t" style="left:50.6px;width:28.3px;text-align:center;top:16.1px;font-family:'Liberation Sans',sans-serif;font-size:5.3px;letter-spacing:0.2px;color:#1a1a1a">1941</span><div style="left:79.7px;top:2.2px;width:22.3px;height:21.9px;background:#e4e4e4;border:1px solid #cfcfcf;border-radius:3px"></div><svg style="left:81.6px;top:4.5px" width="18.8" height="13" viewBox="0 0 28.4 19.6"><path d="M0 6 V13.4 A14.2 6 0 0 0 28.4 13.4 V6 Z" fill="url(#rb)"/><ellipse cx="14.2" cy="6" rx="14.2" ry="5.9" fill="#8ab6c8"/><g stroke="#e3eff4" stroke-width="1.5" fill="none"><path d="M4.5 5 L11 5.8"/><path d="M17.5 6.2 L24 7"/><path d="M10.5 9 L13.2 7.2"/><path d="M15.2 4.8 L18 3"/></g></svg><span class="t" style="left:76.7px;width:28.3px;text-align:center;top:16.1px;font-family:'Liberation Sans',sans-serif;font-size:5.3px;letter-spacing:0.2px;color:#1a1a1a">2901</span><div style="left:105.7px;top:2.2px;width:22.3px;height:21.9px;background:#e4e4e4;border:1px solid #cfcfcf;border-radius:3px"></div><svg style="left:107.6px;top:4.5px" width="18.8" height="13" viewBox="0 0 28.4 19.6"><path d="M0 6 V13.4 A14.2 6 0 0 0 28.4 13.4 V6 Z" fill="url(#rb)"/><ellipse cx="14.2" cy="6" rx="14.2" ry="5.9" fill="#8ab6c8"/><g stroke="#e3eff4" stroke-width="1.5" fill="none"><path d="M4.5 5 L11 5.8"/><path d="M17.5 6.2 L24 7"/><path d="M10.5 9 L13.2 7.2"/><path d="M15.2 4.8 L18 3"/></g></svg><span class="t" style="left:102.7px;width:28.3px;text-align:center;top:16.1px;font-family:'Liberation Sans',sans-serif;font-size:5.3px;letter-spacing:0.2px;color:#1a1a1a">2911</span><div style="left:131.8px;top:2.2px;width:22.3px;height:21.9px;background:#e4e4e4;border:1px solid #cfcfcf;border-radius:3px"></div><svg style="left:133.7px;top:4.5px" width="18.8" height="13" viewBox="0 0 28.4 19.6"><path d="M0 6 V13.4 A14.2 6 0 0 0 28.4 13.4 V6 Z" fill="url(#rb)"/><ellipse cx="14.2" cy="6" rx="14.2" ry="5.9" fill="#8ab6c8"/><g stroke="#e3eff4" stroke-width="1.5" fill="none"><path d="M4.5 5 L11 5.8"/><path d="M17.5 6.2 L24 7"/><path d="M10.5 9 L13.2 7.2"/><path d="M15.2 4.8 L18 3"/></g></svg><span class="t" style="left:128.8px;width:28.3px;text-align:center;top:16.1px;font-family:'Liberation Sans',sans-serif;font-size:4.9px;letter-spacing:-0.25px;color:#1a1a1a">819IOX</span><div style="left:157.8px;top:2.2px;width:22.3px;height:21.9px;background:#e4e4e4;border:1px solid #cfcfcf;border-radius:3px"></div><svg style="left:159.7px;top:4.5px" width="18.8" height="13" viewBox="0 0 28.4 19.6"><path d="M0 6 V13.4 A14.2 6 0 0 0 28.4 13.4 V6 Z" fill="url(#rb)"/><ellipse cx="14.2" cy="6" rx="14.2" ry="5.9" fill="#8ab6c8"/><g stroke="#e3eff4" stroke-width="1.5" fill="none"><path d="M4.5 5 L11 5.8"/><path d="M17.5 6.2 L24 7"/><path d="M10.5 9 L13.2 7.2"/><path d="M15.2 4.8 L18 3"/></g></svg><span class="t" style="left:154.8px;width:28.3px;text-align:center;top:16.1px;font-family:'Liberation Sans',sans-serif;font-size:4.9px;letter-spacing:-0.25px;color:#1a1a1a">819HGW</span><div style="left:183.8px;top:2.2px;width:22.3px;height:21.9px;background:#e4e4e4;border:1px solid #cfcfcf;border-radius:3px"></div><svg style="left:185.8px;top:4.5px" width="18.8" height="13" viewBox="0 0 28.4 19.6"><path d="M0 6 V13.4 A14.2 6 0 0 0 28.4 13.4 V6 Z" fill="url(#rb)"/><ellipse cx="14.2" cy="6" rx="14.2" ry="5.9" fill="#8ab6c8"/><g stroke="#e3eff4" stroke-width="1.5" fill="none"><path d="M4.5 5 L11 5.8"/><path d="M17.5 6.2 L24 7"/><path d="M10.5 9 L13.2 7.2"/><path d="M15.2 4.8 L18 3"/></g></svg><span class="t" style="left:180.8px;width:28.3px;text-align:center;top:16.1px;font-family:'Liberation Sans',sans-serif;font-size:5.3px;letter-spacing:0.2px;color:#1a1a1a">829</span><div style="left:209.9px;top:2.2px;width:22.3px;height:21.9px;background:#e4e4e4;border:1px solid #cfcfcf;border-radius:3px"></div><svg style="left:211.8px;top:4.5px" width="18.8" height="13" viewBox="0 0 28.4 19.6"><path d="M0 6 V13.4 A14.2 6 0 0 0 28.4 13.4 V6 Z" fill="url(#rb)"/><ellipse cx="14.2" cy="6" rx="14.2" ry="5.9" fill="#8ab6c8"/><g stroke="#e3eff4" stroke-width="1.5" fill="none"><path d="M4.5 5 L11 5.8"/><path d="M17.5 6.2 L24 7"/><path d="M10.5 9 L13.2 7.2"/><path d="M15.2 4.8 L18 3"/></g></svg><span class="t" style="left:206.9px;width:28.3px;text-align:center;top:16.1px;font-family:'Liberation Sans',sans-serif;font-size:5.3px;letter-spacing:0.2px;color:#1a1a1a">1240</span><div style="left:236.0px;top:2.2px;width:22.3px;height:21.9px;background:#e4e4e4;border:1px solid #cfcfcf;border-radius:3px"></div><svg style="left:237.9px;top:4.5px" width="18.8" height="13" viewBox="0 0 28.4 19.6"><path d="M0 6 V13.4 A14.2 6 0 0 0 28.4 13.4 V6 Z" fill="url(#rb)"/><ellipse cx="14.2" cy="6" rx="14.2" ry="5.9" fill="#8ab6c8"/><g stroke="#e3eff4" stroke-width="1.5" fill="none"><path d="M4.5 5 L11 5.8"/><path d="M17.5 6.2 L24 7"/><path d="M10.5 9 L13.2 7.2"/><path d="M15.2 4.8 L18 3"/></g></svg><span class="t" style="left:233.0px;width:28.3px;text-align:center;top:16.1px;font-family:'Liberation Sans',sans-serif;font-size:4.2px;letter-spacing:-0.25px;color:#1a1a1a">PT-Router</span></div><div class="" style="left:136.6px;top:654.4px;width:253.3px;height:9.4px;background:#f0f0f0"></div><div class="" style="left:148.2px;top:654.4px;width:35.4px;height:9.4px;background:#cdcdcd"></div><svg style="left:137px;top:654px" width="10" height="10" viewBox="0 0 10 10" fill="none" stroke="#333" stroke-width="1.1"><path d="M6 2.8 L3.6 5.2 L6 7.6"/></svg><svg style="left:380px;top:654px" width="10" height="10" viewBox="0 0 10 10" fill="none" stroke="#333" stroke-width="1.1"><path d="M4 2.8 L6.4 5.2 L4 7.6"/></svg><div class="" style="left:136.4px;top:665px;width:255.6px;height:13px;background:#fff;border-top:1px solid #2a2a2a;border-left:1px solid #2a2a2a;border-right:1px solid #2a2a2a"></div><span class="t " style="left:249.2px;top:667.9px;letter-spacing:-0.12px;transform:scaleX(0.906);transform-origin:0 50%;">CGR1240</span><div class="" style="left:394.2px;top:609.8px;width:1.6px;height:67px;background:#a3a3a3"></div><div class="" style="left:395.8px;top:609.8px;width:11px;height:67px;background:#f6f6f6"></div><svg style="left:395px;top:640px" width="8" height="9" viewBox="0 0 8 9"><path d="M1.6 1.2 L6.2 4.4 L1.6 7.6Z" fill="#555"/></svg><svg style="left:416px;top:619.4px" width="11" height="11" viewBox="0 0 11 11"><circle cx="5.4" cy="5.4" r="4.9" fill="#8db4c6" stroke="#7aa3b6" stroke-width="0.6"/><circle cx="5.4" cy="5.4" r="3.1" fill="#efe6a6"/><rect x="4.9" y="3.4" width="1.1" height="4" fill="#a89a3a"/></svg><div class="" style="left:435px;top:618.7px;width:64.8px;height:12px;background:#fff;border:1px solid #7a7a7a"></div><span class="t " style="left:438.6px;top:620.9px;letter-spacing:0.64px;">Scenario 0</span><svg style="left:489px;top:621px" width="9" height="8" viewBox="0 0 9 8" fill="none" stroke="#333" stroke-width="0.9"><path d="M1.6 2.4 L4.4 5.2 L7.2 2.4"/></svg><div class="btn" style="left:408.3px;top:638.9px;width:46.2px;height:13px;"></div><span class="t " style="left:425.7px;top:641.7px;letter-spacing:-0.12px;transform:scaleX(0.833);transform-origin:0 50%;">New</span><div class="btn" style="left:457px;top:638.9px;width:46.6px;height:13px;"></div><span class="t " style="left:468.8px;top:641.7px;letter-spacing:0.57px;">Delete</span><div class="btn" style="left:410.9px;top:658.3px;width:89.6px;height:13px;"></div><span class="t " style="left:413.3px;top:661.1px;letter-spacing:0.24px;">Toggle PDU List Window</span><div class="" style="left:508.6px;top:610.6px;width:317.2px;height:65.9px;background:#fff;border:1px solid #b4b4b4"></div><span class="t " style="left:511.4px;top:613.5px;letter-spacing:0.81px;">Fire</span><span class="t " style="left:534.7px;top:613.5px;letter-spacing:0.82px;">Last Status</span><span class="t " style="left:590.4px;top:613.5px;letter-spacing:0.36px;">Source</span><span class="t " style="left:622.3px;top:613.5px;letter-spacing:0.69px;">Destination</span><span class="t " style="left:677.0px;top:613.5px;letter-spacing:-0.02px;">Type</span><span class="t " style="left:700.5px;top:613.5px;letter-spacing:0.41px;">Color</span><span class="t " style="left:729.0px;top:613.5px;letter-spacing:0.45px;">Time(sec)</span><span class="t " style="left:774.0px;top:613.5px;letter-spacing:0.71px;">Periodic</span><span class="t " style="left:815.8px;top:613.5px;letter-spacing:-0.12px;transform:scaleX(0.785);transform-origin:0 50%;">Num</span><div class="" style="left:532px;top:611.6px;width:1px;height:11.4px;background:#e6e6e6"></div><div class="" style="left:587px;top:611.6px;width:1px;height:11.4px;background:#e6e6e6"></div><div class="" style="left:619.7px;top:611.6px;width:1px;height:11.4px;background:#e6e6e6"></div><div class="" style="left:674px;top:611.6px;width:1px;height:11.4px;background:#e6e6e6"></div><div class="" style="left:697.4px;top:611.6px;width:1px;height:11.4px;background:#e6e6e6"></div><div class="" style="left:725px;top:611.6px;width:1px;height:11.4px;background:#e6e6e6"></div><div class="" style="left:770.4px;top:611.6px;width:1px;height:11.4px;background:#e6e6e6"></div><div class="" style="left:813px;top:611.6px;width:1px;height:11.4px;background:#e6e6e6"></div><div class="" style="left:521.8px;top:623.3px;width:304.8px;height:13px;background:#e0e0e0"></div><svg style="left:523.4px;top:626.4px" width="10" height="9" viewBox="0 0 10 9"><ellipse cx="5" cy="4.4" rx="3.8" ry="3" fill="#1c1c3a"/><ellipse cx="5.4" cy="4.4" rx="2.2" ry="1.8" fill="#a01818"/></svg><span class="t " style="left:540.4px;top:623.0px;letter-spacing:0.62px;">Successful</span><span class="t " style="left:598.0px;top:623.0px;letter-spacing:-0.12px;transform:scaleX(0.915);transform-origin:0 50%;">PC0</span><span class="t " style="left:640.4px;top:623.0px;letter-spacing:-0.12px;transform:scaleX(0.915);transform-origin:0 50%;">PC1</span><span class="t " style="left:679.0px;top:623.0px;letter-spacing:-0.12px;transform:scaleX(0.858);transform-origin:0 50%;">ICMP</span><div class="" style="left:700.5px;top:625.9px;width:9.2px;height:9.2px;background:#6ec04e"></div><span class="t " style="left:738.8px;top:623.0px;letter-spacing:0.45px;">0.000</span><span class="t " style="left:790.6px;top:623.0px;letter-spacing:-0.12px;transform:scaleX(0.723);transform-origin:0 50%;">N</span><span class="t " style="left:819.6px;top:623.0px;letter-spacing:0.08px;">0</span><div class="" style="left:509.6px;top:666px;width:317px;height:9px;background:#f0f0f0"></div><div class="" style="left:520.5px;top:666px;width:141.5px;height:9px;background:#cdcdcd"></div><svg style="left:509.6px;top:665.6px" width="10" height="10" viewBox="0 0 10 10" fill="none" stroke="#333" stroke-width="1.1"><path d="M6 2.8 L3.6 5.2 L6 7.6"/></svg><svg style="left:816px;top:665.6px" width="10" height="10" viewBox="0 0 10 10" fill="none" stroke="#333" stroke-width="1.1"><path d="M4 2.8 L6.4 5.2 L4 7.6"/></svg><div class="" style="left:826px;top:609.8px;width:2.3px;height:67px;background:#bdbdbd"></div><div class="" style="left:393px;top:676.7px;width:437px;height:1.3px;background:#fff"></div><div class="" style="left:828.2px;top:0px;width:0.9px;height:26px;background:#9c9c9c"></div><div class="" style="left:828.2px;top:26px;width:0.9px;height:652px;background:#b4b4b4"></div><div class="" style="left:829.1px;top:0px;width:0.9px;height:678px;background:#fafafa"></div></div></body></html>
